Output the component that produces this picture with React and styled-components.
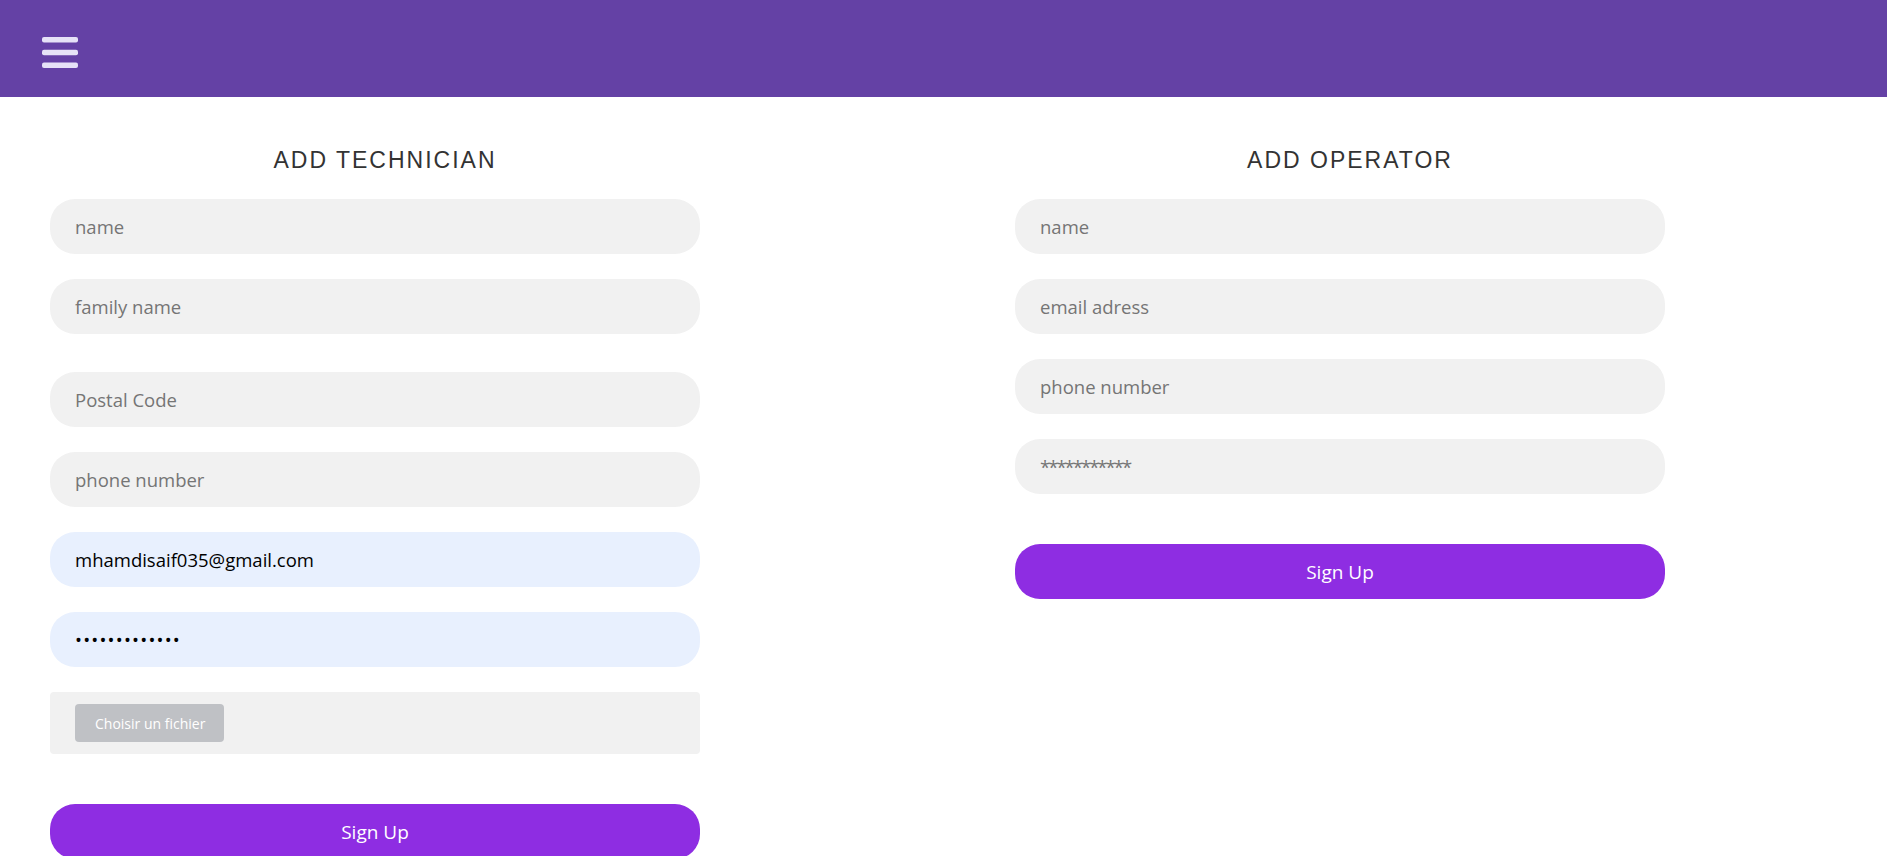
import React from "react";
import styled, { createGlobalStyle } from "styled-components";

const GlobalStyle = createGlobalStyle`
  html, body {
    margin: 0;
    padding: 0;
    background: #ffffff;
    font-family: "Open Sans", "Noto Sans", sans-serif;
  }
  * { box-sizing: border-box; }
`;

const Header = styled.header`
  height: 97px;
  background: #6441a5;
  display: flex;
  align-items: center;
  padding-left: 42px;
`;

const MenuButton = styled.button`
  border: none;
  background: transparent;
  padding: 0;
  margin-top: 8px;
  width: 36px;
  height: 32px;
  display: flex;
  cursor: pointer;
`;

const Main = styled.main`
  display: flex;
  align-items: flex-start;
  padding: 49px 0 0 50px;
  gap: 315px;
`;

const Column = styled.section`
  width: 650px;
  display: flex;
  flex-direction: column;
  gap: 25px;
`;

const Title = styled.h2`
  margin: 0;
  padding-left: 20px;
  height: 28px;
  line-height: 28px;
  text-align: center;
  font-family: "Liberation Sans", Arial, sans-serif;
  font-weight: 400;
  font-size: 23px;
  letter-spacing: 2px;
  color: #333333;
`;

const Field = styled.input`
  width: 100%;
  height: 55px;
  border: none;
  outline: none;
  border-radius: 25px;
  padding: 0 25px;
  margin-top: ${(p) => p.$extraTop || 0}px;
  background: ${(p) => (p.$autofilled ? "#e8f0fe" : "#f1f1f1")};
  font-family: "Open Sans", "Noto Sans", sans-serif;
  font-size: 18.5px;
  letter-spacing: ${(p) => p.$spacing || 0}px;
  color: #000000;
  &::placeholder {
    color: #757575;
    opacity: 1;
  }
`;

const FileBox = styled.label`
  height: 62px;
  background: #f1f1f1;
  border-radius: 4px;
  display: flex;
  align-items: center;
  padding-left: 25px;
`;

const FileButton = styled.span`
  height: 38px;
  display: inline-flex;
  align-items: center;
  padding: 0 19px 0 20px;
  background: #bfc1c5;
  border-radius: 4px;
  color: #ffffff;
  font-family: "Open Sans", "Noto Sans", sans-serif;
  font-size: 14px;
`;

const SubmitButton = styled.button`
  height: 55px;
  width: 100%;
  margin-top: ${(p) => p.$extraTop || 0}px;
  border: none;
  border-radius: 25px;
  background: #8e2de2;
  color: #ffffff;
  font-family: "Open Sans", "Noto Sans", sans-serif;
  font-size: 19px;
  cursor: pointer;
`;

const Hamburger = () => (
  <svg width="36" height="32" viewBox="0 0 36 32">
    <rect x="0" y="0" width="36" height="5.5" rx="2" fill="#e6e2f7" />
    <rect x="0" y="12.8" width="36" height="5.5" rx="2" fill="#e6e2f7" />
    <rect x="0" y="25.6" width="36" height="5.5" rx="2" fill="#e6e2f7" />
  </svg>
);

export default function App() {
  return (
    <>
      <GlobalStyle />
      <Header>
        <MenuButton aria-label="menu">
          <Hamburger />
        </MenuButton>
      </Header>
      <Main>
        <Column>
          <Title>ADD TECHNICIAN</Title>
          <Field placeholder="name" />
          <Field placeholder="family name" />
          <Field placeholder="Postal Code" $extraTop={13} />
          <Field placeholder="phone number" />
          <Field $autofilled defaultValue="mhamdisaif035@gmail.com" />
          <Field $autofilled $spacing={1.2} type="password" defaultValue="mhamdisaif035" />
          <FileBox>
            <FileButton>Choisir un fichier</FileButton>
          </FileBox>
          <SubmitButton $extraTop={25}>Sign Up</SubmitButton>
        </Column>
        <Column>
          <Title>ADD OPERATOR</Title>
          <Field placeholder="name" />
          <Field placeholder="email adress" />
          <Field placeholder="phone number" />
          <Field placeholder="***********" $spacing={-2} />
          <SubmitButton $extraTop={25}>Sign Up</SubmitButton>
        </Column>
      </Main>
    </>
  );
}
